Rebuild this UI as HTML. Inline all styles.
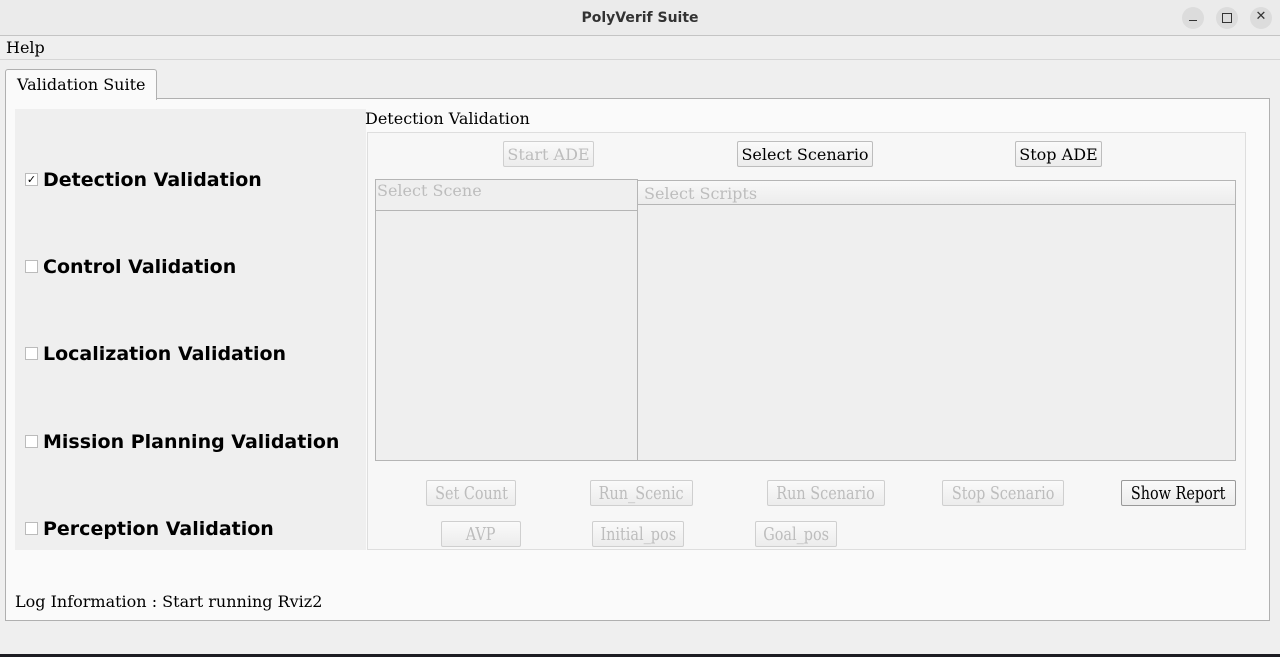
<!DOCTYPE html>
<html><head><meta charset="utf-8"><style>
*{box-sizing:border-box;margin:0;padding:0}
body{width:1280px;height:657px;position:relative;background:#efefef;overflow:hidden;font-family:"DejaVu Serif","Liberation Serif",serif;font-size:16px;color:#000}
.a{position:absolute}
.btn{position:absolute;height:26px;border:1px solid #bdbdbd;border-radius:2px;background:linear-gradient(#fafafa,#ececec);display:flex;align-items:center;justify-content:center;font-size:16px;white-space:nowrap;color:#000}
.dis{color:#bdbdbd;border-color:#cfcfcf}
.cond span{display:inline-block;transform:scaleX(0.8);font-size:18px}
.cb{position:absolute;left:25px;width:13px;height:13px;border:1px solid #bbb;background:#fff;font-size:11px;line-height:11px;text-align:center;font-family:"DejaVu Sans",sans-serif}
.lbl{position:absolute;left:43px;font-family:"DejaVu Sans",sans-serif;font-weight:bold;font-size:19px}
.wb{position:absolute;top:7px;width:22px;height:22px;border-radius:50%;background:#dcdcdc}
</style></head><body>
<div class="a" style="left:0;top:0;width:1280px;height:36px;background:#ebebeb;border-bottom:1px solid #c4c4c4"></div>
<div class="a" style="left:0;top:10px;width:1280px;text-align:center;font-family:'DejaVu Sans',sans-serif;font-weight:bold;font-size:14px;color:#333">PolyVerif Suite</div>
<div class="wb" style="left:1182px"><div class="a" style="left:7px;top:13px;width:8px;height:1px;background:#333"></div></div>
<div class="wb" style="left:1216px"><div class="a" style="left:6px;top:6px;width:10px;height:10px;border:1px solid #333"></div></div>
<div class="wb" style="left:1250px"><div class="a" style="left:0;top:2px;width:22px;text-align:center;font-family:'DejaVu Sans',sans-serif;font-size:13px;color:#333">✕</div></div>
<div class="a" style="left:0;top:36px;width:1280px;height:24px;border-bottom:1px solid #d6d6d6;background:#efefef"></div>
<div class="a" style="left:6px;top:38px">Help</div>
<div class="a" style="left:5px;top:98px;width:1265px;height:523px;background:#fafafa;border:1px solid #b0b0b0"></div>
<div class="a" style="left:5px;top:69px;width:152px;height:31px;background:#fafafa;border:1px solid #b0b0b0;border-bottom:none;border-radius:3px 3px 0 0;padding:5px 0 0 11px">Validation Suite</div>
<div class="a" style="left:15px;top:109px;width:351px;height:441px;background:#efefef"></div>
<div class="cb" style="top:173px">✓</div><div class="lbl" style="top:169px">Detection Validation</div>
<div class="cb" style="top:260px"></div><div class="lbl" style="top:256px">Control Validation</div>
<div class="cb" style="top:347px"></div><div class="lbl" style="top:343px">Localization Validation</div>
<div class="cb" style="top:435px"></div><div class="lbl" style="top:431px">Mission Planning Validation</div>
<div class="cb" style="top:522px"></div><div class="lbl" style="top:518px">Perception Validation</div>
<div class="a" style="left:365px;top:109px">Detection Validation</div>
<div class="a" style="left:367px;top:132px;width:879px;height:418px;border:1px solid #dedede;background:#f7f7f7"></div>
<div class="btn dis" style="left:503px;top:141px;width:91px">Start ADE</div>
<div class="btn" style="left:737px;top:141px;width:136px">Select Scenario</div>
<div class="btn" style="left:1015px;top:141px;width:87px">Stop ADE</div>
<div class="a" style="left:375px;top:179px;width:263px;height:282px;border:1px solid #b5b5b5;background:#efefef"></div>
<div class="a" style="left:376px;top:181px;width:261px;height:30px;border-bottom:1px solid #b5b5b5;color:#bdbdbd;padding-left:1px">Select Scene</div>
<div class="a" style="left:637px;top:180px;width:599px;height:281px;border:1px solid #b5b5b5;background:#efefef"></div>
<div class="a" style="left:638px;top:181px;width:597px;height:24px;border-bottom:1px solid #b5b5b5;background:linear-gradient(#f8f8f8,#ececec);color:#bdbdbd;padding:3px 0 0 6px">Select Scripts</div>
<div class="btn dis cond" style="left:426px;top:480px;width:90px"><span>Set Count</span></div>
<div class="btn dis cond" style="left:590px;top:480px;width:103px"><span>Run_Scenic</span></div>
<div class="btn dis cond" style="left:767px;top:480px;width:118px"><span>Run Scenario</span></div>
<div class="btn dis cond" style="left:942px;top:480px;width:122px"><span>Stop Scenario</span></div>
<div class="btn cond" style="left:1121px;top:480px;width:115px;border-color:#999"><span>Show Report</span></div>
<div class="btn dis cond" style="left:441px;top:521px;width:80px"><span>AVP</span></div>
<div class="btn dis cond" style="left:592px;top:521px;width:92px"><span>Initial_pos</span></div>
<div class="btn dis cond" style="left:755px;top:521px;width:82px"><span>Goal_pos</span></div>
<div class="a" style="left:15px;top:592px">Log Information : Start running Rviz2</div>
<div class="a" style="left:0;top:654px;width:1280px;height:3px;background:#1c1c22"></div>
</body></html>
